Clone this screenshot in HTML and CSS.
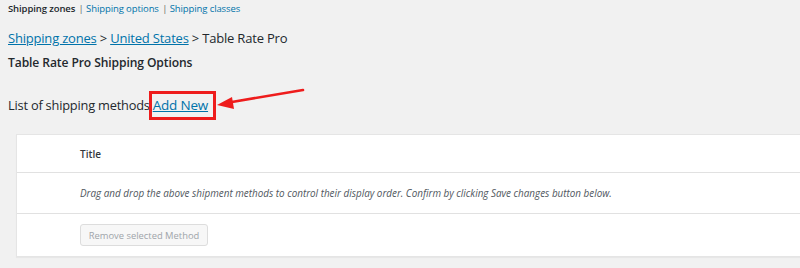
FILE: index.html
```html
<!DOCTYPE html>
<html>
<head>
<meta charset="utf-8">
<link rel="stylesheet" href="styles.css">
</head>
<body>
<div class="page">
  <nav class="subnav">
    <span class="current">Shipping zones</span>
    <span class="sep">|</span>
    <a href="#">Shipping options</a>
    <span class="sep">|</span>
    <a href="#">Shipping classes</a>
  </nav>
  <h2 class="crumbs">
    <a href="#">Shipping zones</a> &gt; <a href="#">United States</a> &gt; Table Rate Pro
  </h2>
  <h3 class="options">Table Rate Pro Shipping Options</h3>
  <div class="list-line">
    <span class="list-label">List of shipping methods</span><span class="highlight"><a href="#">Add New</a></span>
    <svg class="arrow" width="100" height="30" viewBox="0 0 100 30">
      <line x1="88" y1="2" x2="14" y2="14.5" stroke="#ee1c1c" stroke-width="2.6" stroke-linecap="round"/>
      <polygon points="2,17 17,9 19,21" fill="#ee1c1c"/>
    </svg>
  </div>
  <div class="table">
    <div class="row head"><span class="title">Title</span></div>
    <div class="row note"><em>Drag and drop the above shipment methods to control their display order. Confirm by clicking Save changes button below.</em></div>
    <div class="row foot"><button class="btn" disabled>Remove selected Method</button></div>
  </div>
</div>
</body>
</html>
```

FILE: styles.css
```css
html { overflow: hidden; }
body {
  margin: 0;
  background: #f1f1f1;
  font-family: "Open Sans", "Noto Sans", sans-serif;
  color: #23282d;
  width: 800px;
  height: 268px;
}
a { color: #0073aa; }
.page { padding: 0 0 0 8px; position: relative; }
.subnav {
  font-size: 9.5px;
  line-height: 14px;
  padding-top: 2px;
  color: #555;
  letter-spacing: -0.1px;
}
.subnav a { text-decoration: none; color: #0073aa; }
.subnav .current { font-weight: 600; color: #23282d; }
.subnav .sep { color: #666; margin: 0 0 0 1px; }
.crumbs {
  margin: 13px 0 0 0;
  font-size: 13px;
  line-height: 18px;
  font-weight: 400;
  letter-spacing: -0.2px;
}
.crumbs a { text-decoration: underline; }
.options {
  margin: 7px 0 0 0;
  font-size: 12.1px;
  line-height: 18px;
  font-weight: 600;
  letter-spacing: -0.1px;
}
.list-line {
  margin-top: 18px;
  display: flex;
  align-items: center;
  height: 30px;
  font-size: 12.8px;
  letter-spacing: -0.2px;
  position: relative;
}
.highlight {
  display: inline-block;
  border: 3px solid #ee1c1c;
  padding: 3px 5px 3px 1px;
  margin-left: -1px;
  line-height: 17px;
  font-size: 13.5px;
}
.arrow { position: absolute; left: 207px; top: -2px; }
.table {
  margin: 14px -30px 0 8px;
  background: #fff;
  border: 1px solid #e5e5e5;
  box-shadow: 0 1px 1px rgba(0,0,0,.04);
}
.row { padding-left: 63px; display: flex; align-items: center; }
.head { height: 37px; border-bottom: 1px solid #e1e1e1; font-size: 10px; font-weight: 600; color: #32373c; }
.note { height: 40px; border-bottom: 1px solid #e1e1e1; font-size: 9.9px; color: #50575e; }
.foot { height: 42px; }
.btn {
  font-family: inherit;
  font-size: 9.4px;
  color: #a0a5aa;
  background: #f7f7f7;
  border: 1px solid #ddd;
  border-radius: 3px;
  height: 22px;
  width: 128px;
  padding: 0;
}
```
